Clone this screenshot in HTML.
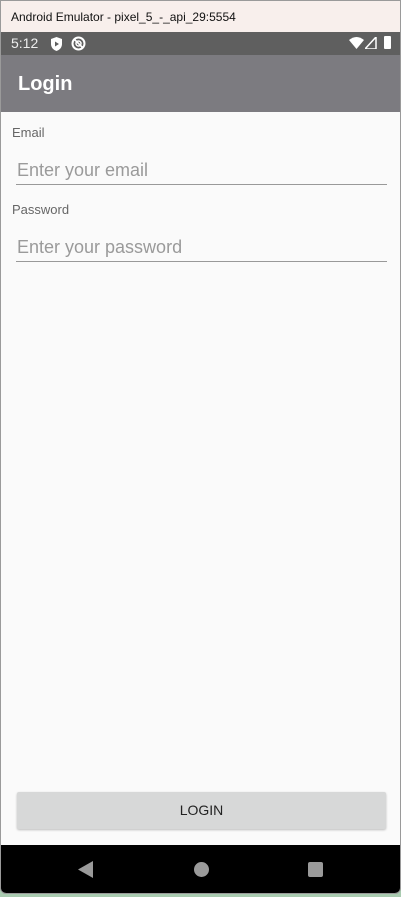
<!DOCTYPE html>
<html><head><meta charset="utf-8"><style>
*{margin:0;padding:0;box-sizing:border-box}
body{width:401px;height:897px;background:#a9cbb0;position:relative;overflow:hidden;font-family:"Liberation Sans",sans-serif}
.win{position:absolute;left:0;top:0;width:401px;height:894px;background:#fafafa;border:1px solid #9a9a9a;border-radius:0 0 6px 6px;overflow:hidden}
.title{position:absolute;left:0;top:0;width:399px;height:31px;background:#f8efec;font-size:12px;color:#111;padding:9px 0 0 10px}
.status{position:absolute;left:0;top:31px;width:399px;height:23px;background:#5f5f5f;color:#eee;font-size:14px}
.appbar{position:absolute;left:0;top:54px;width:399px;height:57px;background:#7c7b80;color:#fff;font-size:20px;font-weight:bold;padding:18px 0 0 17px}
.lbl{position:absolute;left:11px;font-size:13px;color:#666}
.inp{position:absolute;left:15px;width:371px;height:1px;background:#999}
.ph{position:absolute;left:16px;font-size:18px;color:#9a9a9a}
.btn{position:absolute;left:16px;top:791px;width:369px;height:37px;background:#d7d8d8;border-radius:2px;box-shadow:0 1px 2px rgba(0,0,0,.25);text-align:center;line-height:37px;font-size:14px;color:#222}
.nav{position:absolute;left:0;top:844px;width:399px;height:49px;background:#000}
</style></head><body>
<div class="win">
<div class="title">Android Emulator - pixel_5_-_api_29:5554</div>
<div class="status">
<span style="position:absolute;left:10px;top:3px">5:12</span>
<svg style="position:absolute;left:49px;top:5px" width="13" height="14" viewBox="0 0 13 14"><path d="M6.5 0L12 2v5c0 3.5-2.5 6-5.5 7C3.5 13 1 10.5 1 7V2z" fill="#fff"/><path d="M5 4.5v5l4-2.5z" fill="#5f5f5f"/></svg>
<svg style="position:absolute;left:70px;top:4px" width="15" height="15" viewBox="0 0 15 15"><circle cx="7.5" cy="7.5" r="6" fill="none" stroke="#fff" stroke-width="2"/><circle cx="7.5" cy="7.5" r="2.5" fill="none" stroke="#fff" stroke-width="1.5"/><path d="M3 3l9 9" stroke="#fff" stroke-width="1.6"/></svg>
<svg style="position:absolute;left:348px;top:5px" width="15" height="12" viewBox="0 0 15 12"><path d="M0 3Q7.5-3 15 3L7.5 12z" fill="#fff"/></svg>
<svg style="position:absolute;left:364px;top:5px" width="12" height="12" viewBox="0 0 12 12"><path d="M11 0V12H0z" fill="none" stroke="#fff" stroke-width="1.5"/></svg>
<div style="position:absolute;left:383px;top:4px;width:7px;height:13px;background:#fff;border-radius:1px"></div>
</div>
<div class="appbar">Login</div>
<div class="lbl" style="top:124px">Email</div>
<div class="ph" style="top:159px">Enter your email</div>
<div class="inp" style="top:183px"></div>
<div class="lbl" style="top:201px">Password</div>
<div class="ph" style="top:236px">Enter your password</div>
<div class="inp" style="top:260px"></div>
<div class="btn">LOGIN</div>
<div class="nav">
<svg style="position:absolute;left:77px;top:16px" width="15" height="17" viewBox="0 0 15 17"><path d="M15 0V17L0 8.5z" fill="#9a9a9a"/></svg>
<div style="position:absolute;left:193px;top:17px;width:15px;height:15px;border-radius:50%;background:#9a9a9a"></div>
<div style="position:absolute;left:307px;top:17px;width:15px;height:15px;border-radius:2px;background:#9a9a9a"></div>
</div>
</div>
</body></html>
